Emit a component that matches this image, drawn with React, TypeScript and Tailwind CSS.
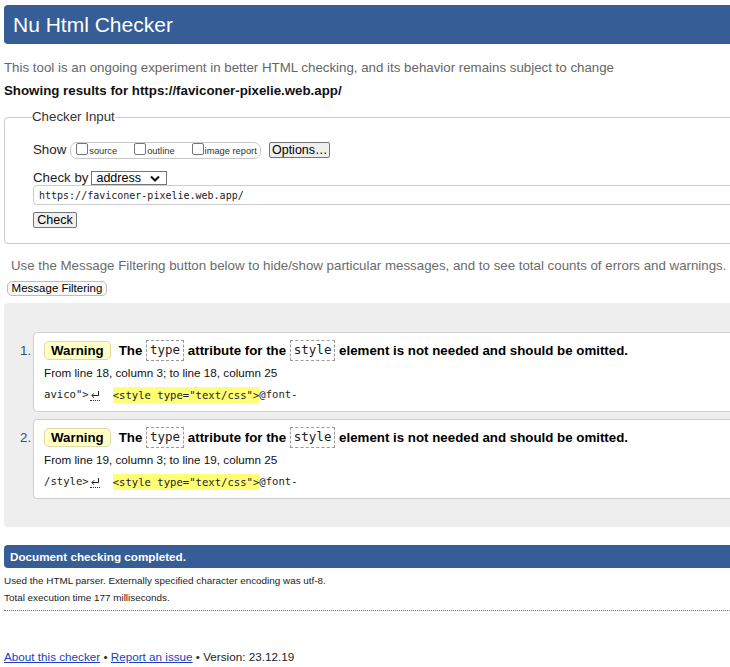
import React from "react";

const sans = { fontFamily: '"Liberation Sans", Arial, sans-serif' };
const mono = { fontFamily: '"DejaVu Sans Mono", "Liberation Mono", monospace' };

function Checkbox() {
  return (
    <span className="block w-[12px] h-[12px] border border-[#767676] rounded-[2px] bg-white shrink-0 -mt-[2px]" />
  );
}

function Code({ children }: { children: React.ReactNode }) {
  return (
    <span
      className="inline-flex items-center h-[21px] px-[3px] border border-dashed border-[#9a9a9a] text-[12.5px] font-normal text-[#222]"
      style={mono}
    >
      {children}
    </span>
  );
}

function Message({ n, line, pre }: { n: string; line: string; pre: string }) {
  return (
    <div className="relative h-[80px] border border-[#cfcfcf] rounded-l-[4px] bg-white pl-[10px] pt-[8px]">
      <span className="absolute left-[-14px] top-[8px] leading-[19px] text-[13.3px] text-[#2f4f7a]">{n}</span>
      <div className="flex items-center h-[19px] text-[13.3px] font-bold text-black whitespace-pre">
        <span className="inline-flex items-center h-[19px] px-[6px] bg-[#ffffc6] border border-[#ddd9a8] rounded-[5px]">Warning</span>
        <span className="ml-[8px]">The </span>
        <Code>type</Code>
        <span> attribute for the </span>
        <Code>style</Code>
        <span> element is not needed and should be omitted.</span>
      </div>
      <div className="mt-[5px] h-[16px] leading-[16px] text-[11.7px] text-[#111]">
        From line {line}, column 3; to line {line}, column 25
      </div>
      <div className="mt-[5px] h-[18px] flex items-center text-[10.6px] text-[#222] whitespace-pre" style={mono}>
        <span>{pre}</span>
        <span className="ml-[1px] border-b border-dotted border-[#333] pb-[1px]">
          <svg width="10" height="9" viewBox="0 0 10 9" className="block">
            <path d="M8.5 1 V5.5 H2" fill="none" stroke="#222" strokeWidth="1" />
            <path d="M4 3.3 L1.8 5.5 L4 7.7" fill="none" stroke="#222" strokeWidth="1" />
          </svg>
        </span>
        <span className="ml-[13px] bg-[#ffff77] h-[16px] leading-[16px]">{'<style type="text/css">'}</span>
        <span>@font-</span>
      </div>
    </div>
  );
}

export default function App() {
  return (
    <div className="w-[730px] h-[667px] overflow-hidden bg-white text-[#333]" style={sans}>
      <div className="w-[770px] pl-[4px]">
        <div className="mt-[5px] h-[39px] bg-[#365d95] rounded-l-[4px] flex items-center pl-[9px] text-white text-[21px]">
          Nu Html Checker
        </div>
        <p className="mt-[15px] leading-[18px] text-[13.3px] text-[#666]">
          This tool is an ongoing experiment in better HTML checking, and its behavior remains subject to change
        </p>
        <p className="mt-[5px] leading-[18px] text-[13.3px] font-bold text-[#111]">
          Showing results for https://faviconer-pixelie.web.app/
        </p>

        <fieldset className="mt-[8px] border border-[#cccccc] rounded-[4px] pl-[28px] pb-[15px]">
          <legend className="-ml-[1px] leading-[18px] text-[13.3px] text-[#333]">Checker Input</legend>
          <div className="mt-[16px] flex items-center h-[16px]">
            <span className="text-[13.3px] leading-[16px] text-[#222]">Show</span>
            <div className="ml-[4px] h-[17px] w-[191px] border border-[#c8c8c8] rounded-[7px] flex items-center pl-[5px] text-[9.3px] text-[#333] whitespace-nowrap">
              <Checkbox />
              <span className="ml-[1px] mt-[3px]">source</span>
              <span className="ml-[17px]" />
              <Checkbox />
              <span className="ml-[1px] mt-[3px]">outline</span>
              <span className="ml-[17px]" />
              <Checkbox />
              <span className="ml-[1px] mt-[3px]">image report</span>
            </div>
            <button className="block ml-[8px] h-[16px] w-[61px] border border-[#767676] rounded-[2px] bg-[#efefef] text-[12.5px] leading-[14px] text-black">
              Options…
            </button>
          </div>
          <div className="mt-[13px] flex items-center h-[14px]">
            <span className="text-[13.3px] text-[#222]">Check by</span>
            <div className="ml-[3px] h-[14px] w-[76px] border border-[#767676] flex items-center justify-between pl-[4px] pr-[6px] text-[12.5px] text-black">
              <span className="leading-[12px]">address</span>
              <svg width="10" height="7" viewBox="0 0 10 7">
                <polyline points="1,1.5 5,5.5 9,1.5" fill="none" stroke="#111" strokeWidth="2" />
              </svg>
            </div>
          </div>
          <div className="h-[20px] border border-[#cccccc] rounded-[4px] flex items-center pl-[5px] text-[10px] text-[#222]" style={mono}>
            https://faviconer-pixelie.web.app/
          </div>
          <button className="block mt-[7px] h-[16px] w-[44px] border border-[#767676] rounded-[2px] bg-[#efefef] text-[12.5px] leading-[14px] text-black">
            Check
          </button>
        </fieldset>

        <p className="mt-[13px] pl-[7px] leading-[18px] text-[13.3px] text-[#6b6b6b] whitespace-nowrap">
          Use the Message Filtering button below to hide/show particular messages, and to see total counts of errors and warnings.
        </p>
        <button className="block ml-[3px] mt-[6px] h-[15px] w-[100px] border border-[#bdbdbd] rounded-[5px] bg-[#fbfbfb] text-[11.5px] leading-[13px] text-black">
          Message Filtering
        </button>

        <div className="mt-[7px] h-[224px] bg-[#eeeeee] rounded-l-[4px] pl-[29px] pt-[29px]">
          <Message n="1." line="18" pre={'avico">'} />
          <div className="h-[7px]" />
          <Message n="2." line="19" pre="/style>" />
        </div>

        <div className="mt-[18px] h-[23px] bg-[#365d95] rounded-l-[4px] flex items-center pl-[6px] text-white text-[11.7px] font-bold">
          Document checking completed.
        </div>
        <p className="mt-[4px] leading-[17px] text-[9.9px] text-[#222]">
          Used the HTML parser. Externally specified character encoding was utf-8.
        </p>
        <p className="leading-[17px] text-[9.9px] text-[#222]">Total execution time 177 milliseconds.</p>
        <div className="mt-[4px] w-[726px] border-t border-dotted border-[#777]" />
        <p className="mt-[38px] leading-[16px] text-[11.7px] text-[#222]">
          <a className="text-[#1c3fc0] underline">About this checker</a> • <a className="text-[#1c3fc0] underline">Report an issue</a> • Version: 23.12.19
        </p>
      </div>
    </div>
  );
}
